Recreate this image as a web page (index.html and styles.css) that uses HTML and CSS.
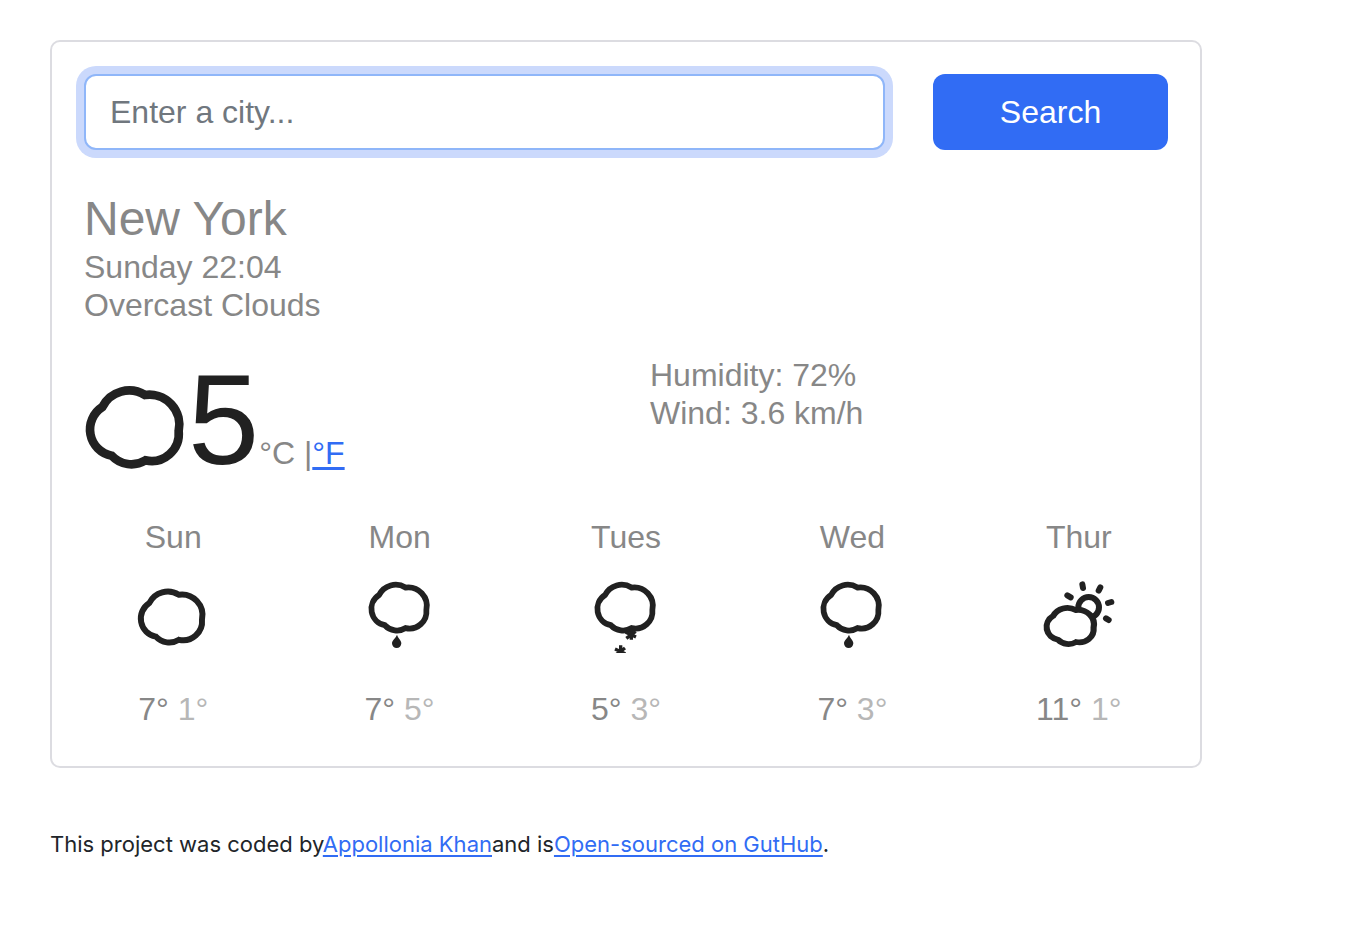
FILE: index.html
```html
<!DOCTYPE html>
<html lang="en">
<head>
  <meta charset="utf-8">
  <meta name="viewport" content="width=device-width, initial-scale=1">
  <title>Weather</title>
  <link rel="stylesheet" href="styles.css">
</head>
<body>
  <svg class="sprite" aria-hidden="true">
    <symbol id="cloud" viewBox="0 0 400 400" overflow="visible">
      <path d="M97 171A90 90 0 0 1 225 135A90 90 0 0 1 326 243A82 82 0 0 1 226 331A80 80 0 0 1 125 317A80 80 0 0 1 97 171Z"/>
    </symbol>
    <symbol id="flake" viewBox="-20 -20 40 40" overflow="visible">
      <path d="M1-17V16M-16-6L15 8M-14 12L14-9"/>
    </symbol>
  </svg>

  <main class="card">
    <form class="row">
      <div class="col col-9">
        <input class="city-input" type="search" aria-label="City" placeholder="Enter a city...">
      </div>
      <div class="col col-3">
        <button class="search-button" type="button">Search</button>
      </div>
    </form>

    <h1 class="city">New York</h1>
    <ul class="details">
      <li>Sunday 22:04</li>
      <li>Overcast Clouds</li>
    </ul>

    <section class="row current">
      <div class="col col-6 temperature">
        <svg class="current-icon" viewBox="42 84 300 300" role="img" aria-label="Overcast clouds">
          <g class="line"><use href="#cloud" width="400" height="400"/></g>
        </svg>
        <div class="reading"><span class="degrees">5</span><span>°C |<a href="#">°F</a></span></div>
      </div>
      <ul class="col col-6 details">
        <li>Humidity: 72%</li>
        <li>Wind: 3.6 km/h</li>
      </ul>
    </section>

    <section class="row forecast">
      <div class="day">
        <div>Sun</div>
        <svg class="day-icon" viewBox="0 0 240 240" role="img" aria-label="Cloudy">
          <g class="line" transform="translate(-18 -40) scale(.69)"><use href="#cloud" width="400" height="400"/></g>
        </svg>
        <div>7° <span class="low">1°</span></div>
      </div>
      <div class="day">
        <div>Mon</div>
        <svg class="day-icon" viewBox="0 0 240 240" role="img" aria-label="Rain">
          <g class="line line-medium" transform="translate(-3 -52) scale(.62)"><use href="#cloud" width="400" height="400"/></g>
          <path class="solid" d="M111 173C114 184 124 190 124 199A14 14 0 0 1 96 199C96 190 107 184 111 173Z"/>
        </svg>
        <div>7° <span class="low">5°</span></div>
      </div>
      <div class="day">
        <div>Tues</div>
        <svg class="day-icon snow-icon" viewBox="0 0 240 228" role="img" aria-label="Snow">
          <g class="line line-medium" transform="translate(-3 -52) scale(.62)"><use href="#cloud" width="400" height="400"/></g>
          <g class="flakes"><use href="#flake" x="115" y="152" width="40" height="40"/><use href="#flake" x="83" y="202" width="40" height="40"/></g>
        </svg>
        <div>5° <span class="low">3°</span></div>
      </div>
      <div class="day">
        <div>Wed</div>
        <svg class="day-icon" viewBox="0 0 240 240" role="img" aria-label="Rain">
          <g class="line line-medium" transform="translate(-3 -52) scale(.62)"><use href="#cloud" width="400" height="400"/></g>
          <path class="solid" d="M111 173C114 184 124 190 124 199A14 14 0 0 1 96 199C96 190 107 184 111 173Z"/>
        </svg>
        <div>7° <span class="low">3°</span></div>
      </div>
      <div class="day">
        <div>Thur</div>
        <svg class="day-icon" viewBox="0 0 240 240" role="img" aria-label="Partly cloudy">
          <circle class="ring" cx="149" cy="91" r="31"/>
          <path class="ring" d="M130 22L132 33M184 31L179 41M207 78L217 75M201 124L209 129M85 55L95 61"/>
          <g class="line line-bold" transform="translate(-9 33) scale(.53 .49)"><use href="#cloud" width="400" height="400"/></g>
        </svg>
        <div>11° <span class="low">1°</span></div>
      </div>
    </section>
  </main>

  <footer class="credit">This project was coded by<a href="#">Appollonia Khan</a>and is<a href="#">Open-sourced on GutHub</a>.</footer>
</body>
</html>
```

FILE: styles.css
```css
* {
  box-sizing: border-box;
}

body {
  margin: 0;
  padding: 40px 50px;
  background: #fff;
  color: #212529;
  font-family: "Liberation Sans", Arial, sans-serif;
  font-size: 32px;
  line-height: 38px;
}

a {
  color: #316cf4;
  text-decoration-thickness: 3px;
  text-underline-offset: 3px;
}

.sprite {
  display: none;
}

.card {
  max-width: 1152px;
  padding: 32px 32px 38px;
  border: 2px solid #dcdce1;
  border-radius: 10px;
  color: #878787;
}

.row {
  display: flex;
  margin: 0 -24px;
}

.col {
  padding: 0 24px;
}

.col-3 {
  width: 25%;
}

.col-6 {
  width: 50%;
}

.col-9 {
  width: 75%;
}

.city-input,
.search-button {
  display: block;
  width: 100%;
  height: 76px;
  border-radius: 12px;
  font: inherit;
}

.city-input {
  appearance: none;
  padding: 0 24px;
  border: 2px solid #8fb6f9;
  outline: none;
  background: #fff;
  box-shadow: 0 0 0 8px #cbd9fc;
}

.city-input::placeholder {
  color: #70777e;
  opacity: 1;
}

.search-button {
  border: 0;
  background: #316cf4;
  color: #fff;
}

.city {
  margin: 40px 0 0;
  font-size: 48px;
  font-weight: 400;
  line-height: 58px;
}

.details {
  margin: 0;
  list-style: none;
}

.details:not(.col) {
  padding: 0;
}

.current {
  margin-top: 32px;
}

.temperature {
  display: flex;
  align-items: flex-start;
  gap: 4px;
}

.current-icon {
  width: 100px;
  height: 100px;
  margin-top: 22px;
  overflow: visible;
}

.current-icon,
.day-icon {
  filter: blur(0.5px);
}

.reading {
  display: flex;
  align-items: baseline;
}

.degrees {
  color: #212121;
  font-size: 128px;
  line-height: 128px;
}

.forecast {
  margin-top: 34px;
  text-align: center;
}

.day {
  flex: 1;
}

.day-icon {
  display: block;
  width: 80px;
  height: 80px;
  margin: 21px auto 33px;
}

.snow-icon {
  height: 76px;
  margin-bottom: 37px;
}

.low {
  color: #b7b7b7;
}

.line {
  fill: #fff;
  stroke: #212121;
  stroke-width: 26;
}

.line-medium {
  stroke-width: 28;
}

.line-bold {
  stroke-width: 35;
}

.solid {
  fill: #212121;
}

.ring {
  fill: none;
  stroke: #212121;
  stroke-width: 18;
  stroke-linecap: round;
}

.flakes {
  stroke: #212121;
  stroke-width: 10;
}

.credit {
  margin-top: 61px;
  color: #212529;
  font-family: Inter, sans-serif;
  font-size: 22px;
  line-height: 30px;
}

.credit a {
  text-decoration-thickness: 2px;
}
```
